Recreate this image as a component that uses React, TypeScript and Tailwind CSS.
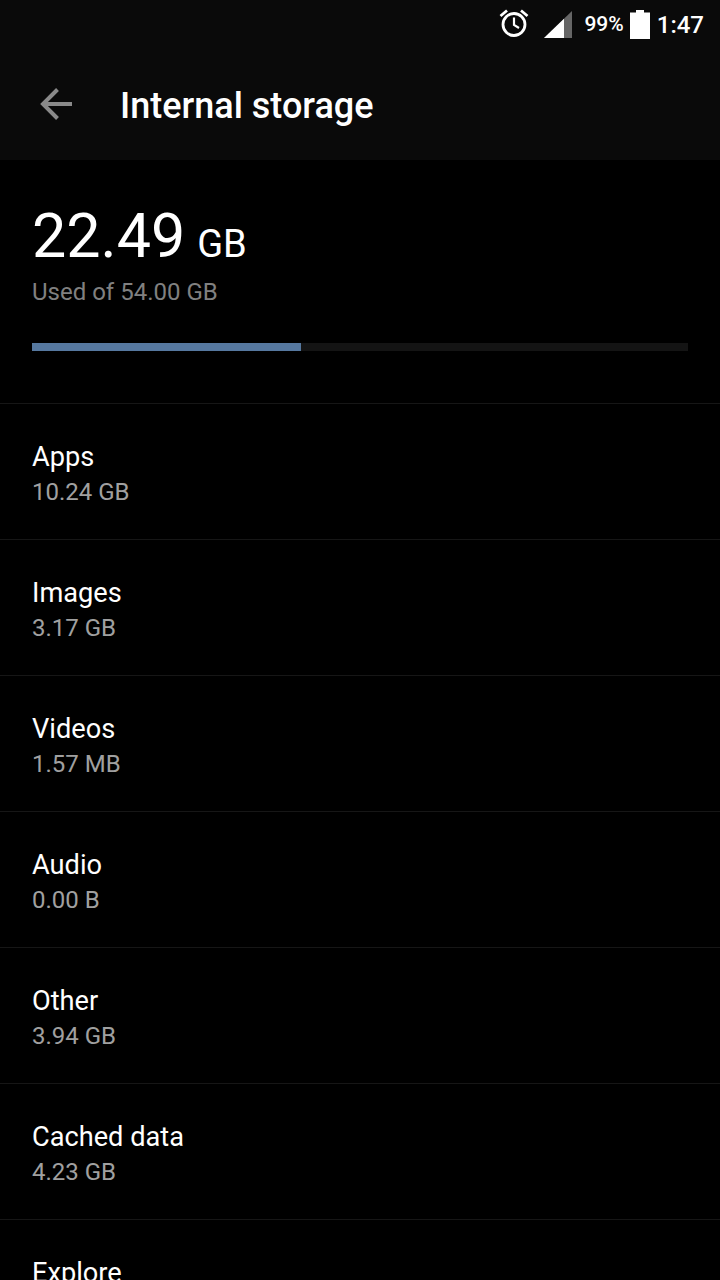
const ROWS = [
  { name: "Apps", size: "10.24 GB" },
  { name: "Images", size: "3.17 GB" },
  { name: "Videos", size: "1.57 MB" },
  { name: "Audio", size: "0.00 B" },
  { name: "Other", size: "3.94 GB" },
  { name: "Cached data", size: "4.23 GB" },
  { name: "Explore", size: "" },
];

function StatusBar() {
  return (
    <div className="flex h-12 items-center justify-end pr-4 text-white">
      <svg width="32" height="32" viewBox="0 0 32 32" fill="none" stroke="white" className="mr-[14px]">
        <circle cx="16" cy="16.5" r="11" strokeWidth="2.8" />
        <path d="M16 9.500v7.500l5 3" strokeWidth="2.2" />
        <path d="M2.500 8l6.500-5.500M29.500 8L23 2.500" strokeWidth="2.8" />
      </svg>
      <svg width="28" height="27" viewBox="0 0 28 27" className="mr-3">
        <path d="M0 27L28 0v27z" fill="#666" />
        <path d="M0 27L20 7.700v19.300z" fill="white" />
      </svg>
      <span className="mr-[6px] pt-[1px] text-[21px] font-medium leading-none">99%</span>
      <svg width="20" height="29" viewBox="0 0 20 29" className="mr-[7px]">
        <path d="M6 0h8v2.500h6V29H0V2.500h6z" fill="white" />
      </svg>
      <span className="pt-[1px] text-2xl font-medium leading-none">1:47</span>
    </div>
  );
}

export default function App() {
  return (
    <div className="h-[1280px] w-[720px] overflow-hidden bg-black font-['Roboto',sans-serif] text-white">
      <div className="h-40 bg-[#0a0a0a]">
        <StatusBar />
        <div className="flex h-[112px] items-center">
          <svg width="32" height="32" viewBox="0 0 32 32" fill="none" stroke="#8a8a8a" strokeWidth="4" className="ml-10">
            <path d="M32 16H3M17.500 1.500L3 16l14.500 14.500" />
          </svg>
          <h1 className="ml-[48px] pt-1 text-4xl font-medium">Internal storage</h1>
        </div>
      </div>

      <div className="h-[243px] px-8 pt-[38px]">
        <div className="flex items-baseline leading-none">
          <span className="text-[61px] leading-[76px]">22.49</span>
          <span className="ml-3 text-[38px]">GB</span>
        </div>
        <p className="mt-[2px] text-2xl leading-8 text-[#808080]">Used of 54.00 GB</p>
        <div className="mt-[35px] h-2 bg-[#141414]">
          <div className="h-2 w-[269px] bg-[#56789f]" />
        </div>
      </div>

      {ROWS.map((row) => (
        <div key={row.name} className="h-[136px] border-t border-[#161616] px-8 pt-[35px]">
          <p className="text-[27.200px] leading-9">{row.name}</p>
          <p className="pt-[1px] text-2xl leading-8 text-[#a0a0a0]">{row.size}</p>
        </div>
      ))}
    </div>
  );
}
